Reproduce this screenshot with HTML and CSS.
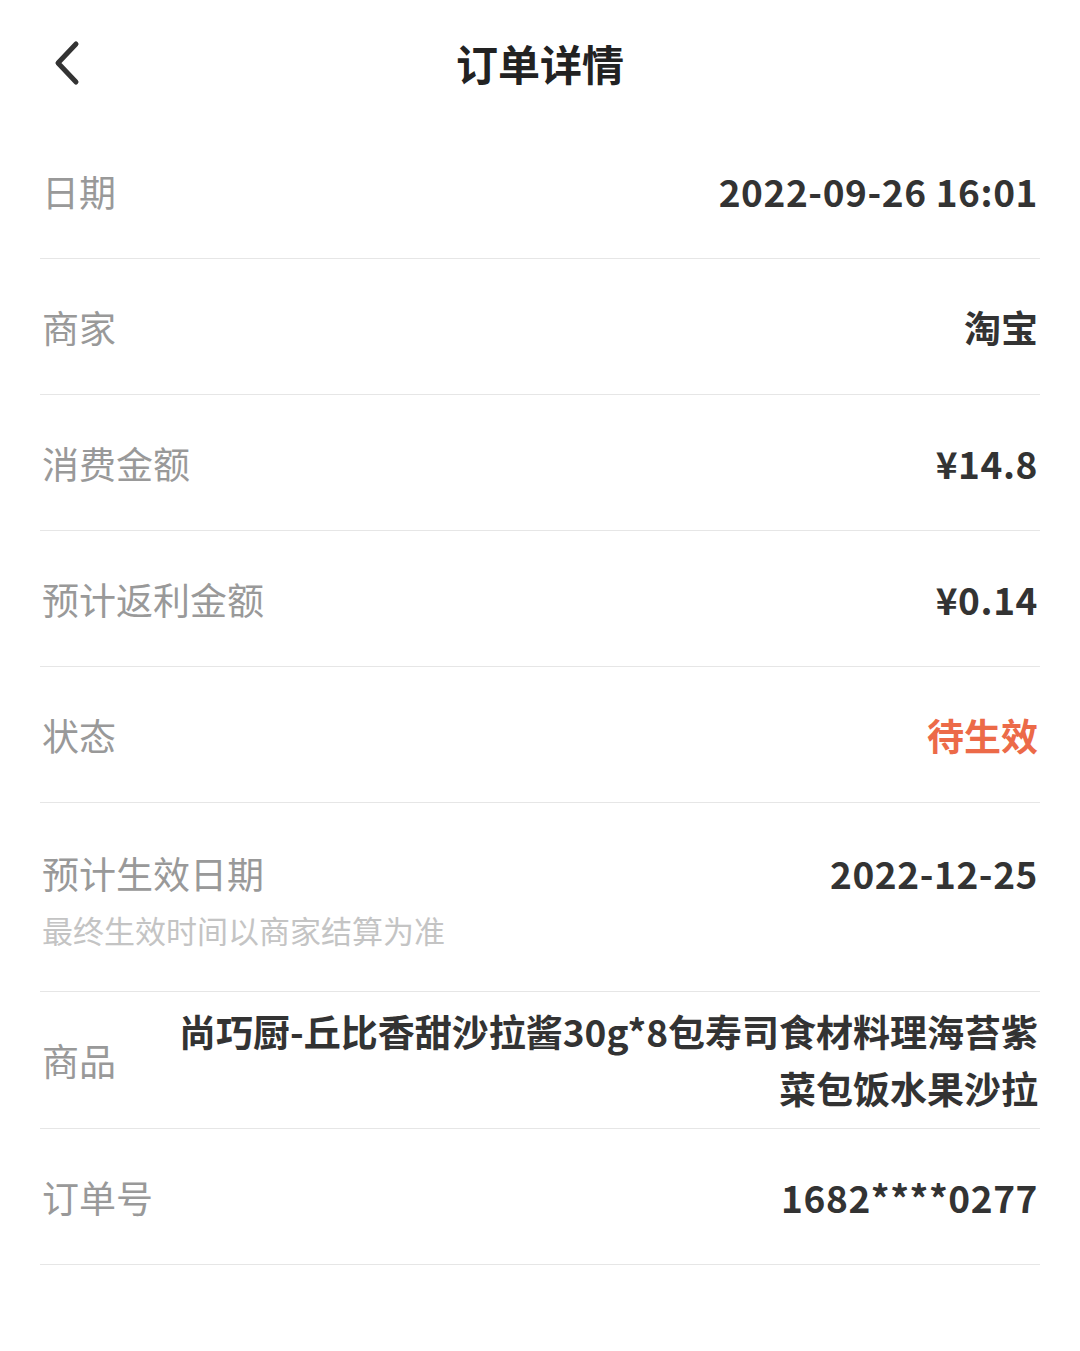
FILE: index.html
```html
<!DOCTYPE html>
<html lang="zh-CN">
<head>
<meta charset="utf-8">
<title>订单详情</title>
<link rel="stylesheet" href="styles.css">
</head>
<body>
<div class="page">
  <header class="header">
    <span class="back">
      <svg width="40" height="50" viewBox="0 0 40 50"><polyline points="27,5 9,24 27,43" fill="none" stroke="#333" stroke-width="5" stroke-linecap="round" stroke-linejoin="round"/></svg>
    </span>
    <h1 class="title">订单详情</h1>
  </header>
  <main class="list">
    <div class="row"><span class="label">日期</span><span class="value num">2022-09-26 16:01</span></div>
    <div class="row"><span class="label">商家</span><span class="value">淘宝</span></div>
    <div class="row"><span class="label">消费金额</span><span class="value num">¥14.8</span></div>
    <div class="row"><span class="label">预计返利金额</span><span class="value num">¥0.14</span></div>
    <div class="row"><span class="label">状态</span><span class="value status">待生效</span></div>
    <div class="row row-top">
      <div class="label-group">
        <span class="label">预计生效日期</span>
        <span class="sub">最终生效时间以商家结算为准</span>
      </div>
      <span class="value num">2022-12-25</span>
    </div>
    <div class="row row-goods"><span class="label">商品</span><span class="value goods">尚巧厨-丘比香甜沙拉酱30g*8包寿司食材料理海苔紫菜包饭水果沙拉</span></div>
    <div class="row"><span class="label">订单号</span><span class="value num">1682****0277</span></div>
  </main>
</div>
</body>
</html>
```

FILE: styles.css
```css
* { box-sizing: border-box; }
html, body {
  margin: 0;
  padding: 0;
  background: #ffffff;
}
body {
  font-family: "Noto Sans CJK SC", "Noto Sans", sans-serif;
  color: #333333;
}
.page {
  width: 1080px;
}
.header {
  position: relative;
  height: 123px;
  display: flex;
  align-items: center;
  justify-content: center;
}
.back {
  position: absolute;
  left: 49px;
  top: 39px;
  width: 40px;
  height: 50px;
  display: block;
}
.back svg { display: block; }
.title {
  margin: 0;
  font-size: 42px;
  font-weight: 700;
  color: #222222;
  line-height: 56px;
  margin-top: 2px;
}
.list {
  padding: 0 40px;
}
.row {
  display: flex;
  align-items: center;
  justify-content: space-between;
  min-height: 136px;
  border-bottom: 1px solid #e6e6e6;
  padding: 0 2px 0 2px;
}
.label {
  font-size: 37px;
  color: #999999;
  line-height: 50px;
  white-space: nowrap;
}
.value {
  font-size: 37px;
  font-weight: 700;
  color: #333333;
  line-height: 50px;
  text-align: right;
}
.num {
  letter-spacing: 0.6px;
}
.status {
  color: #ec6a48;
}
.row-top {
  align-items: flex-start;
  min-height: 188px;
  padding-top: 45px;
  padding-bottom: 40px;
}
.label-group {
  display: flex;
  flex-direction: column;
  gap: 11px;
}
.sub {
  font-size: 31px;
  color: #c4c4c4;
  line-height: 42px;
}
.row-goods {
  gap: 58px;
  padding-top: 11px;
  padding-bottom: 11px;
}
.goods {
  line-height: 57px;
}
```
